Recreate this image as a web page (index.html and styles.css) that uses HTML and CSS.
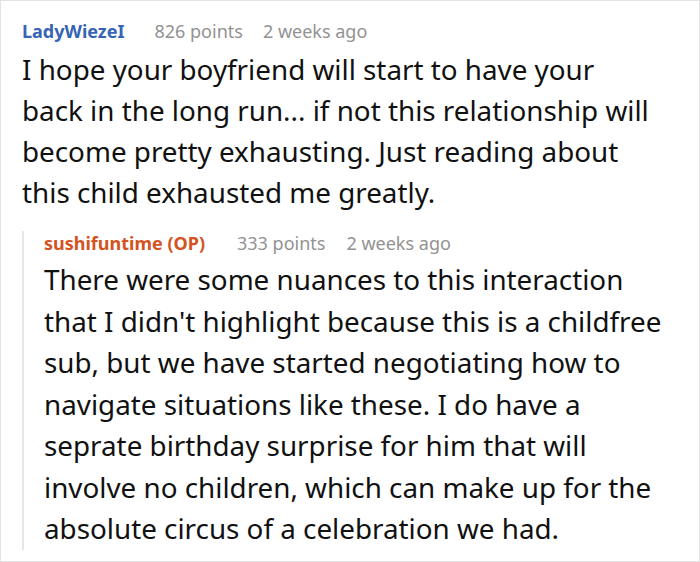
FILE: index.html
```html
<!DOCTYPE html>
<html>
<head>
<meta charset="utf-8">
<link rel="stylesheet" href="styles.css">
</head>
<body>
<div class="frame">
  <div class="comment">
    <div class="meta">
      <span class="author">LadyWiezeI</span>
      <span class="points">826 points</span>
      <span class="time">2 weeks ago</span>
    </div>
    <p class="text text-main">I hope your boyfriend will start to have your back in the long run... if not this relationship will become pretty exhausting. Just reading about this child exhausted me greatly.</p>
    <div class="reply">
      <div class="meta meta-reply">
        <span class="author op">sushifuntime (OP)</span>
        <span class="points">333 points</span>
        <span class="time">2 weeks ago</span>
      </div>
      <p class="text">There were some nuances to this interaction that I didn't highlight because this is a childfree sub, but we have started negotiating how to navigate situations like these. I do have a seprate birthday surprise for him that will involve no children, which can make up for the absolute circus of a celebration we had.</p>
    </div>
  </div>
</div>
</body>
</html>
```

FILE: styles.css
```css
html, body {
  margin: 0;
  padding: 0;
  background: #fff;
}
.frame {
  box-sizing: border-box;
  width: 700px;
  height: 562px;
  border: 1px solid #e3e3e3;
  overflow: hidden;
  font-family: "Noto Sans", sans-serif;
  color: #111;
}
.comment {
  padding: 18px 25px 0 21px;
}
.meta {
  font-size: 18px;
  line-height: 24px;
  display: flex;
}
.author {
  font-weight: 700;
  color: #3565b4;
  margin-right: 30px;
}
.points {
  color: #929292;
  margin-right: 20px;
}
.time {
  color: #929292;
}
.text {
  margin: 6px 0 0 0;
  font-size: 27.8px;
  line-height: 41.5px;
}
.text-main {
  max-width: 636px;
  line-height: 41px;
}
.reply {
  margin-top: 18px;
  border-left: 2px solid #e6e6e6;
  padding-left: 20px;
}
.op {
  color: #d4531f;
  margin-right: 32px;
}
.reply .points {
  margin-right: 21px;
}
.reply .text {
  margin-top: 4px;
}
```
